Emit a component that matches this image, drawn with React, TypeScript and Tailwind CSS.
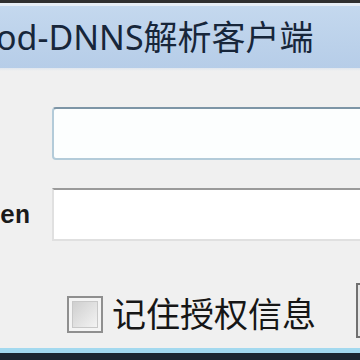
import React from "react";

export default function App() {
  return (
    <div className="w-[360px] h-[360px] overflow-hidden bg-[#f0f0f0] flex flex-col" style={{ fontFamily: '"Noto Sans", "Noto Sans CJK SC", sans-serif' }}>
      <div className="h-[3px] bg-[#2f2f2f] shrink-0" />
      <div className="h-[3px] bg-[#e6edf5] shrink-0" />
      <div className="h-[62px] shrink-0 flex items-center bg-gradient-to-b from-[#c4d8ee] to-[#b6cde8] overflow-hidden">
        <span className="whitespace-nowrap text-[34px] leading-none text-[#17263a] -ml-[4px]">
          od-DNNS解析客户端
        </span>
      </div>
      <div className="h-[3px] shrink-0 bg-gradient-to-b from-[#dfe6ee] to-[#f0f0f0]" />
      <div className="flex-1 flex flex-col overflow-hidden">
        <div className="flex mt-[36px] h-[53px]">
          <div className="w-[52px] shrink-0" />
          <div className="w-[340px] shrink-0 h-full rounded-[4px] border-[2px] border-[#b3cbd9] border-t-[#7d95a6] bg-[#fcfefe]" />
        </div>
        <div className="flex mt-[28px] h-[53px]">
          <div className="w-[52px] shrink-0 overflow-hidden flex justify-end items-end pr-[22px] pb-[12px]">
            <span className="whitespace-nowrap text-[25px] leading-none font-bold text-[#1a1a1a] font-mono">Token</span>
          </div>
          <div className="w-[340px] shrink-0 h-full border-[2px] border-[#e0e0e0] border-t-[#9a9a9a] bg-white" />
        </div>
        <div className="flex items-start mt-[42px]">
          <div className="w-[67px] shrink-0" />
          <div className="w-[36px] h-[37px] shrink-0 mt-[13px] border-[2px] border-[#8f8f8f] bg-[#f4f4f4] p-[3px]">
            <div className="w-full h-full bg-gradient-to-br from-[#cfcfcf] to-[#f3f3f3] border border-[#c8c8c8]" />
          </div>
          <span className="ml-[9px] mt-[9px] whitespace-nowrap text-[34px] leading-[44px] text-[#161616]">
            记住授权信息
          </span>
          <div className="ml-auto w-[4px] h-[55px] shrink-0 border-l-[2px] border-t-[2px] border-b-[2px] border-[#707070] bg-[#e6e6e6]" />
        </div>
      </div>
      <div className="h-[5px] shrink-0 bg-[#a3d9ef]" />
      <div className="h-[7px] shrink-0 bg-[#1c2631]" />
    </div>
  );
}
